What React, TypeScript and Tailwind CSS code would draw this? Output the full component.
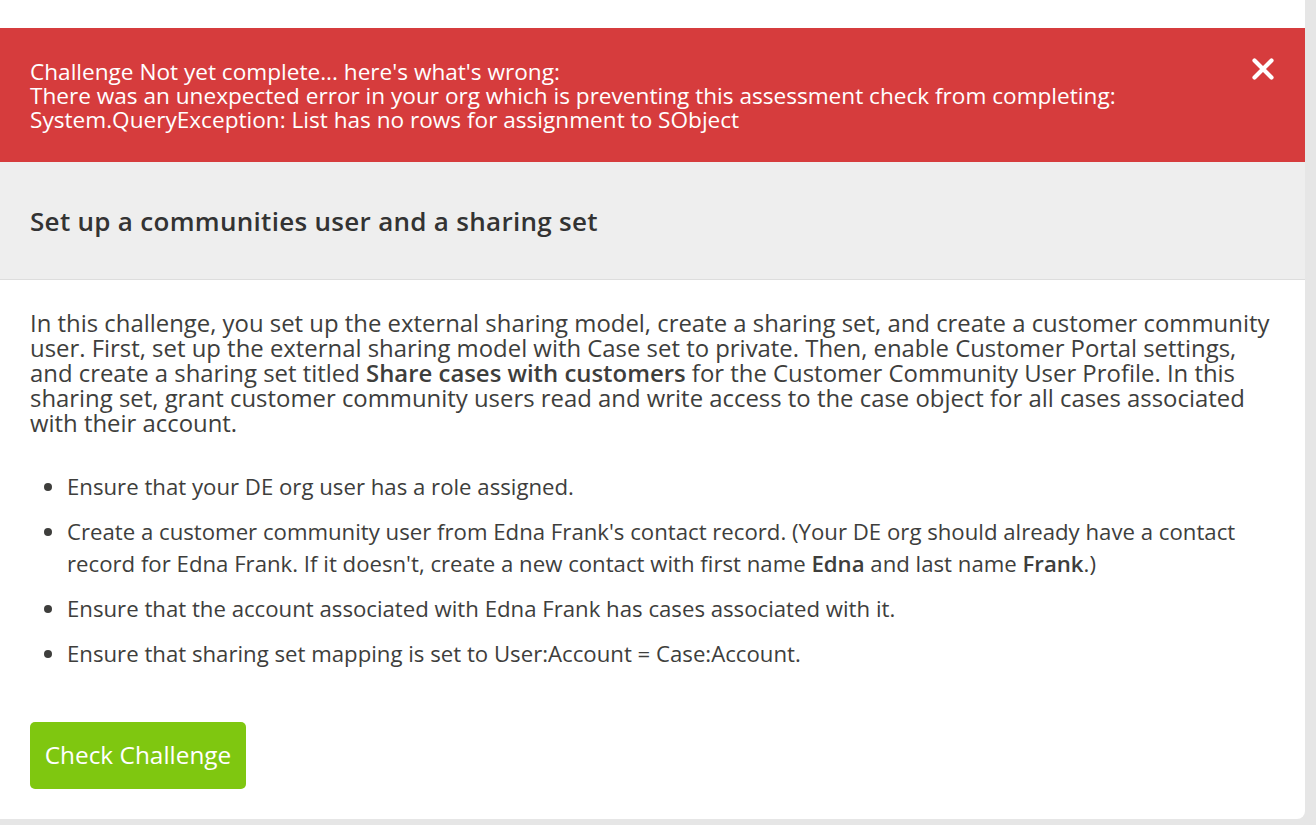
import React from "react";

export default function App() {
  const font = { fontFamily: '"Open Sans", "Noto Sans", sans-serif' };
  return (
    <div className="w-[1316px] h-[825px] bg-[#e6e6e6] overflow-hidden" style={font}>
      <div className="w-[1305px] h-[819px] bg-white rounded-br-[8px] pt-[28px] flex flex-col">
        <div className="bg-[#d63c3d] h-[134px] px-[30px] pt-[32px] flex justify-between">
          <div className="text-white text-[22.6px] leading-[24px]">
            <div>Challenge Not yet complete... here's what's wrong:</div>
            <div>There was an unexpected error in your org which is preventing this assessment check from completing:</div>
            <div>System.QueryException: List has no rows for assignment to SObject</div>
          </div>
          <div className="mt-[-3px]">
            <svg width="24" height="24" viewBox="0 0 24 24">
              <path d="M3.5 3.5 L20.5 20.5 M20.5 3.5 L3.5 20.5" stroke="white" strokeWidth="4.2" strokeLinecap="round" />
            </svg>
          </div>
        </div>
        <div className="bg-[#eeeeee] h-[118px] border-b border-[#dddddd] px-[30px] flex items-center pt-[2px]">
          <h2 className="text-[26px] font-semibold text-[#333333] tracking-[0.3px]">Set up a communities user and a sharing set</h2>
        </div>
        <div className="px-[30px] pt-[30px] text-[#3e3e3c] text-[22.2px]">
          <p className="leading-[25px] text-[23.9px]">
            In this challenge, you set up the external sharing model, create a sharing set, and create a customer community user. First, set up the external sharing model with Case set to private. Then, enable Customer Portal settings, and create a sharing set titled <b className="font-semibold">Share cases with customers</b> for the Customer Community User Profile. In this sharing set, grant customer community users read and write access to the case object for all cases associated with their account.
          </p>
          <ul className="list-disc pl-[37px] mt-[36px] leading-[32px] flex flex-col gap-[13px]">
            <li>Ensure that your DE org user has a role assigned.</li>
            <li>
              Create a customer community user from Edna Frank's contact record. (Your DE org should already have a contact record for Edna Frank. If it doesn't, create a new contact with first name <b className="font-semibold">Edna</b> and last name <b className="font-semibold">Frank</b>.)
            </li>
            <li>Ensure that the account associated with Edna Frank has cases associated with it.</li>
            <li>Ensure that sharing set mapping is set to User:Account = Case:Account.</li>
          </ul>
          <button className="mt-[52px] h-[67px] w-[216px] bg-[#7fc710] rounded-[5px] text-white text-[24.4px]">
            Check Challenge
          </button>
        </div>
      </div>
    </div>
  );
}
